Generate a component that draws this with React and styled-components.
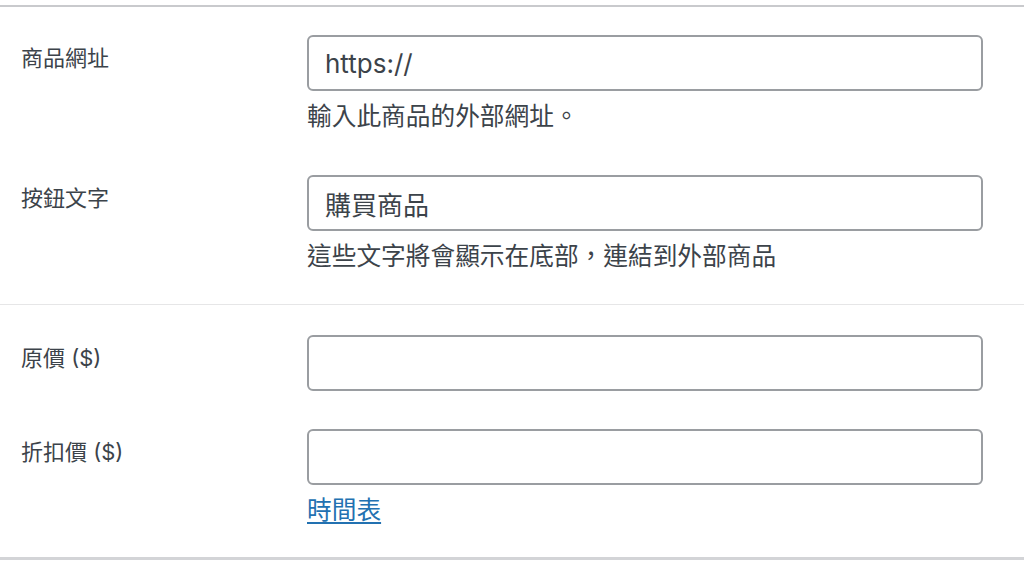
import styled, { createGlobalStyle } from 'styled-components'

const GlobalStyle = createGlobalStyle`
  body {
    margin: 0;
    background: #fff;
    font-family: Inter, 'Noto Sans CJK TC', sans-serif;
  }
`

const Panel = styled.div`
  padding-top: 5px;
  background: #fff;
`

const Box = styled.div`
  border-top: 2px solid #c9cacd;
  border-bottom: 3px solid #d3d4d7;
`

const Section = styled.section`
  display: flex;
  flex-direction: column;
  gap: ${(p) => p.$gap}px;
  padding: ${(p) => p.$top}px 0 ${(p) => p.$bottom}px;
  border-bottom: ${(p) => (p.$divider ? '1px solid #e6e6e7' : 'none')};
`

const Row = styled.div`
  display: flex;
  align-items: flex-start;
  padding-left: 21px;
`

const Label = styled.label`
  width: 286px;
  flex-shrink: 0;
  padding-top: 6px;
  font-size: 22px;
  line-height: 34px;
  color: #3c434a;
`

const Field = styled.div`
  width: 676px;
  display: flex;
  flex-direction: column;
`

const Input = styled.input`
  box-sizing: border-box;
  width: 100%;
  height: 56px;
  padding: 0 16px;
  border: 2px solid #9a9da1;
  border-radius: 6px;
  font-family: Inter, 'Noto Sans CJK TC', sans-serif;
  font-size: 26px;
  color: #3c434a;
  outline: none;
  background: #fff;
`

const Description = styled.p`
  margin: 8px 0 0;
  font-size: 24.7px;
  line-height: 34px;
  color: #3c434a;
`

const ScheduleLink = styled.a`
  margin-top: 8px;
  font-size: 24.7px;
  line-height: 34px;
  color: #2271b1;
  text-decoration: underline;
  text-underline-offset: 3px;
  align-self: flex-start;
`

export default function App() {
  return (
    <>
      <GlobalStyle />
      <Panel>
        <Box>
          <Section $gap={42} $top={28} $bottom={31} $divider>
            <Row>
              <Label>商品網址</Label>
              <Field>
                <Input type='text' defaultValue='https://' />
                <Description>輸入此商品的外部網址。</Description>
              </Field>
            </Row>
            <Row>
              <Label>按鈕文字</Label>
              <Field>
                <Input type='text' defaultValue='購買商品' />
                <Description>這些文字將會顯示在底部，連結到外部商品</Description>
              </Field>
            </Row>
          </Section>
          <Section $gap={38} $top={30} $bottom={30}>
            <Row>
              <Label>原價 ($)</Label>
              <Field>
                <Input type='text' />
              </Field>
            </Row>
            <Row>
              <Label>折扣價 ($)</Label>
              <Field>
                <Input type='text' />
                <ScheduleLink href='#'>時間表</ScheduleLink>
              </Field>
            </Row>
          </Section>
        </Box>
      </Panel>
    </>
  )
}
